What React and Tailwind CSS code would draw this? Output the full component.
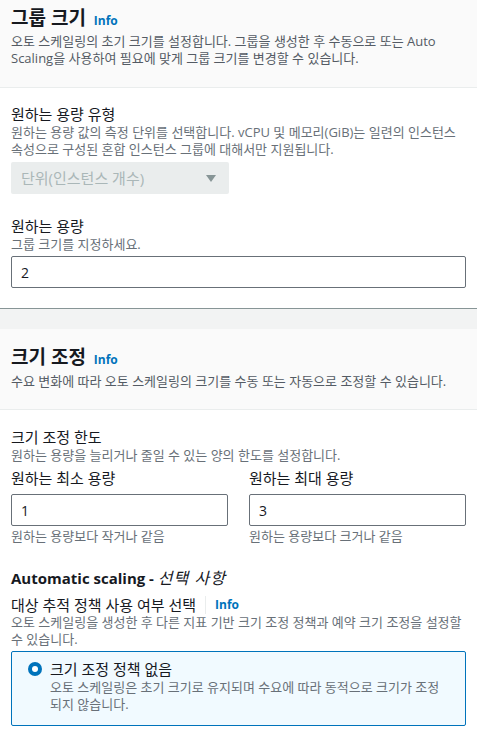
import React from "react";

const font = { fontFamily: '"Open Sans", "Noto Sans CJK KR", sans-serif' };

const Info = () => (
  <span className="ml-[8px] text-[12px] font-bold text-[#0073bb]">Info</span>
);

const Label = ({ children }) => (
  <div className="text-[15px] leading-[20px] text-[#16191f]">{children}</div>
);

const Desc = ({ children }) => (
  <div className="text-[13px] leading-[17px] text-[#687078]">{children}</div>
);

const Input = ({ value }) => (
  <div className="h-[32px] border border-[#687078] rounded-[2px] bg-white px-[9px] flex items-center text-[14px] text-[#16191f]">
    {value}
  </div>
);

export default function App() {
  return (
    <div style={font} className="w-[477px] min-h-[733px] bg-white overflow-hidden">
      {/* 그룹 크기 */}
      <div className="bg-[#fafafa] border-b border-[#eaeded] px-[11px] pt-[7px] pb-[20px]">
        <div className="flex items-baseline">
          <span className="text-[19px] leading-[22px] font-bold text-[#16191f]">그룹 크기</span>
          <Info />
        </div>
        <div className="mt-[3px] text-[13px] leading-[17px] text-[#545b64]">
          오토 스케일링의 초기 크기를 설정합니다. 그룹을 생성한 후 수동으로 또는 Auto Scaling을 사용하여 필요에 맞게 그룹 크기를 변경할 수 있습니다.
        </div>
      </div>
      <div className="px-[11px] pt-[16px] pb-[20px]">
        <Label>원하는 용량 유형</Label>
        <Desc>
          원하는 용량 값의 측정 단위를 선택합니다. vCPU 및 메모리(GiB)는 일련의 인스턴스 속성으로 구성된 혼합 인스턴스 그룹에 대해서만 지원됩니다.
        </Desc>
        <div className="mt-[4px] w-[218px] h-[32px] bg-[#eaeded] rounded-[2px] flex items-center justify-between pl-[10px] pr-[13px]">
          <span className="text-[15px] text-[#aab7b8]">단위(인스턴스 개수)</span>
          <svg width="10" height="7" viewBox="0 0 10 7">
            <path d="M0 0h10L5 7z" fill="#879596" />
          </svg>
        </div>
        <div className="mt-[22px]">
          <Label>원하는 용량</Label>
          <Desc>그룹 크기를 지정하세요.</Desc>
          <div className="mt-[3px]">
            <Input value="2" />
          </div>
        </div>
      </div>
      <div className="border-t border-[#879596] h-[21px] bg-[#f2f3f3]" />

      {/* 크기 조정 */}
      <div className="bg-[#fafafa] border-b border-[#eaeded] px-[11px] pt-[17px] pb-[19px]">
        <div className="flex items-baseline">
          <span className="text-[19px] leading-[22px] font-bold text-[#16191f]">크기 조정</span>
          <Info />
        </div>
        <div className="mt-[4px] text-[13px] leading-[17px] text-[#545b64]">
          수요 변화에 따라 오토 스케일링의 크기를 수동 또는 자동으로 조정할 수 있습니다.
        </div>
      </div>
      <div className="px-[11px] pt-[17px]">
        <Label>크기 조정 한도</Label>
        <Desc>원하는 용량을 늘리거나 줄일 수 있는 양의 한도를 설정합니다.</Desc>
        <div className="mt-[4px] grid grid-cols-2 gap-x-[21px]">
          {[
            ["원하는 최소 용량", "1", "원하는 용량보다 작거나 같음"],
            ["원하는 최대 용량", "3", "원하는 용량보다 크거나 같음"],
          ].map(([l, v, h]) => (
            <div key={l}>
              <Label>{l}</Label>
              <div className="mt-[6px]">
                <Input value={v} />
              </div>
              <div className="mt-[2px]">
                <Desc>{h}</Desc>
              </div>
            </div>
          ))}
        </div>
        <div className="mt-[23px] text-[15px] leading-[20px] font-bold text-[#16191f]">
          Automatic scaling - <i className="font-normal text-[16px] tracking-[1px]">선택 사항</i>
        </div>
        <div className="mt-[8px] flex items-center text-[15px] leading-[18px] text-[#16191f]">
          <span>대상 추적 정책 사용 여부 선택</span>
          <span className="ml-[9px] w-px h-[18px] bg-[#eaeded]" />
          <span className="ml-[9px] text-[12px] font-bold text-[#0073bb]">Info</span>
        </div>
        <Desc>오토 스케일링을 생성한 후 다른 지표 기반 크기 조정 정책과 예약 크기 조정을 설정할 수 있습니다.</Desc>
        <div className="mt-[3px] border border-[#0073bb] bg-[#f1faff] rounded-[2px] pl-[16px] pr-[20px] pt-[7px] pb-[12px] flex gap-[8px]">
          <div className="mt-[3px] w-[14px] h-[14px] rounded-full bg-[#0073bb] flex items-center justify-center shrink-0">
            <div className="w-[6px] h-[6px] rounded-full bg-white" />
          </div>
          <div>
            <Label>크기 조정 정책 없음</Label>
            <Desc>오토 스케일링은 초기 크기로 유지되며 수요에 따라 동적으로 크기가 조정되지 않습니다.</Desc>
          </div>
        </div>
      </div>
    </div>
  );
}
